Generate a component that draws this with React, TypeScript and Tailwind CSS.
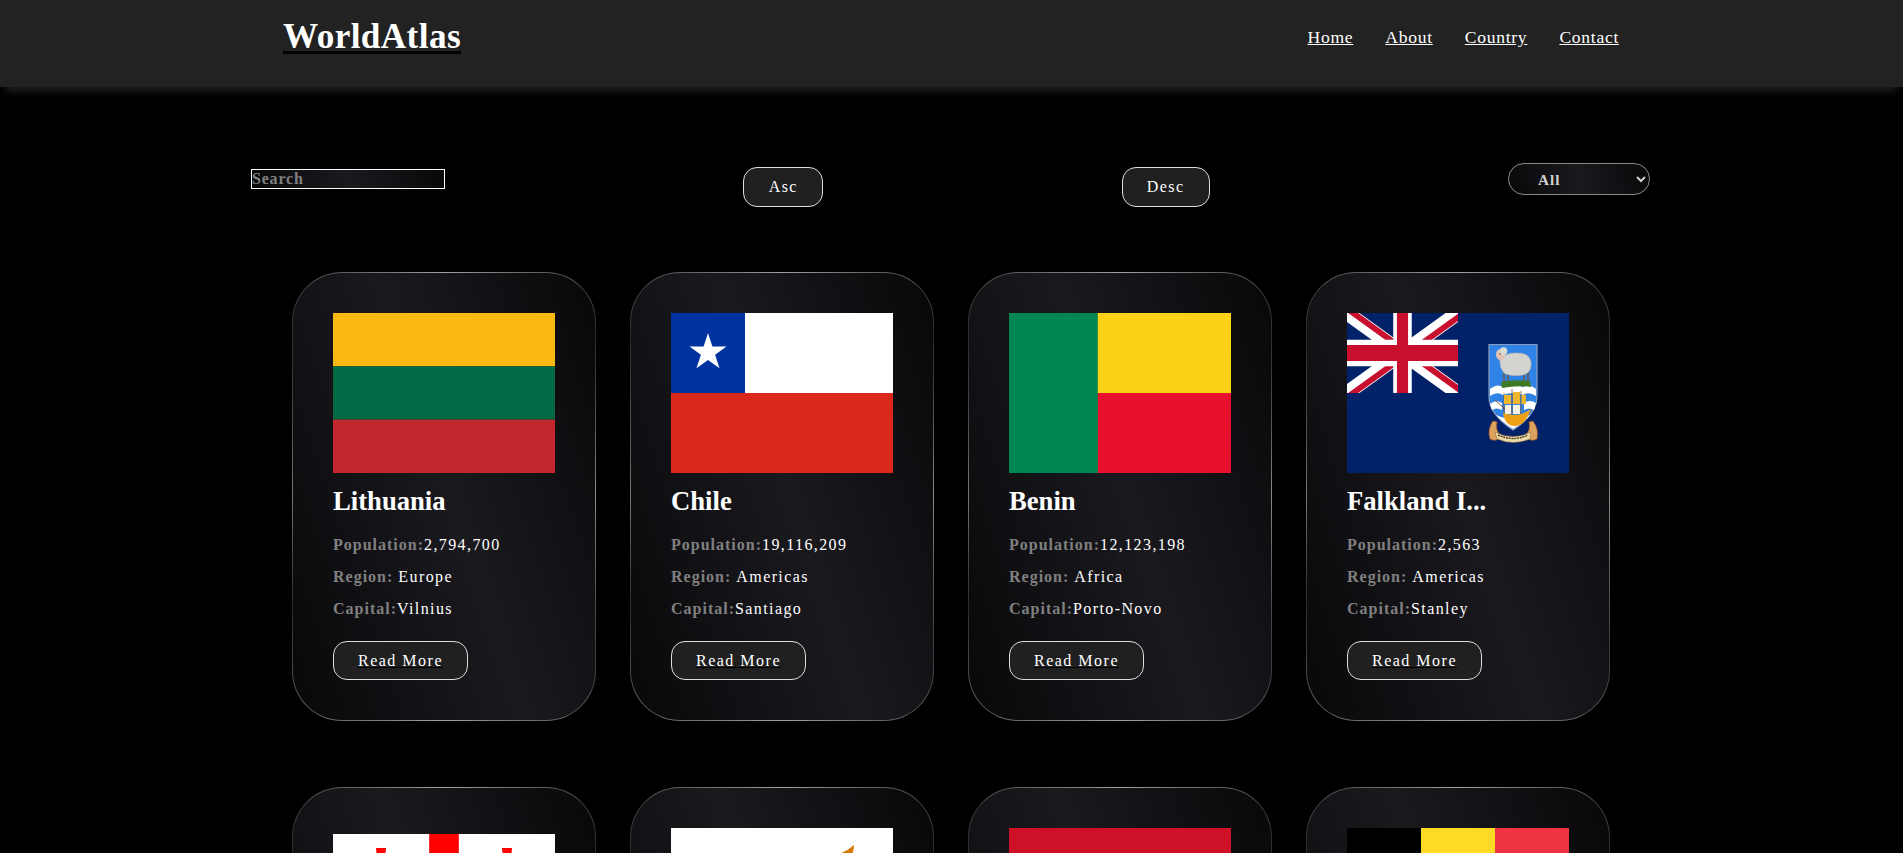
import React from "react";

const Lithuania = () => (
  <svg viewBox="0 0 222 160" className="w-full h-full block" preserveAspectRatio="none">
    <rect width="222" height="53.4" fill="#fdb913" />
    <rect y="53.3" width="222" height="53.4" fill="#006a44" />
    <rect y="106.6" width="222" height="53.4" fill="#c1272d" />
  </svg>
);

const Chile = () => (
  <svg viewBox="0 0 222 160" className="w-full h-full block">
    <rect width="222" height="160" fill="#da291c" />
    <rect width="222" height="80" fill="#fff" />
    <rect width="74" height="80" fill="#0032a0" />
    <path d="M37 20 L41.4 33.5 H55.5 L44.1 41.8 L48.5 55.3 L37 47 L25.5 55.3 L29.9 41.8 L18.5 33.5 H32.6 Z" fill="#fff" />
  </svg>
);

const Benin = () => (
  <svg viewBox="0 0 222 160" className="w-full h-full block">
    <rect width="222" height="80" fill="#fcd116" />
    <rect y="80" width="222" height="80" fill="#e8112d" />
    <rect width="88.8" height="160" fill="#008751" />
  </svg>
);

const Falkland = () => (
  <svg viewBox="0 0 222 160" className="w-full h-full block">
    <rect width="222" height="160" fill="#012169" />
    <svg x="0" y="0" width="111" height="80" viewBox="0 0 60 30" preserveAspectRatio="none">
      <path d="M0 0 L60 30 M60 0 L0 30" stroke="#fff" strokeWidth="6" />
      <path d="M0 0 L30 15 L60 30" stroke="#c8102e" strokeWidth="2.4" fill="none" transform="translate(0.9 -1.2)" />
      <path d="M60 0 L30 15 L0 30" stroke="#c8102e" strokeWidth="2.4" fill="none" transform="translate(0.9 1.2)" />
      <path d="M30 0 V30 M0 15 H60" stroke="#fff" strokeWidth="10" />
      <path d="M30 0 V30 M0 15 H60" stroke="#c8102e" strokeWidth="6" />
    </svg>
    {/* shield */}
    <path d="M142 31.5 H190 V84 Q190 101 166 117 Q142 101 142 84 Z" fill="#2f82e6" stroke="#8d9dbd" strokeWidth="1.2" />
    <path d="M143 76 Q150 70 156 74 Q166 70 176 74 Q182 70 189 76 V83 Q182 78 176 82 Q166 78 156 82 Q150 78 143 83 Z" fill="#fff" />
    <path d="M143 91 Q149 86 155 90 V97 Q149 94 145 97 Z M177 90 Q183 86 189 90 Q188 94 187 97 Q182 94 177 97 Z" fill="#fff" />
    <path d="M149 102 Q158 106 166 106 Q175 106 183 102 Q178 109 166 116 Q155 109 149 102 Z" fill="#fff" />
    {/* grass and sheep */}
    <path d="M157 58 V69 M161 59 V69 M177 59 V68 M181 58 V68" stroke="#6e5a48" strokeWidth="1.5" />
    <path d="M154 69 Q166 66 183 68 L184 74 Q170 72 155 75 Z" fill="#3f7a22" />
    <path d="M153 46 Q158 40 168 40 Q182 39 184 49 Q185 60 176 62 Q164 64 157 60 Q152 54 153 46 Z" fill="#d3d3cf" stroke="#b4b4b0" strokeWidth="0.6" />
    <ellipse cx="153.5" cy="41.5" rx="4.5" ry="5.5" fill="#e2c4b2" />
    <circle cx="156.5" cy="38" r="3.8" fill="#dcdbd6" />
    <circle cx="153" cy="41" r="0.7" fill="#5b3a2c" />
    {/* ship */}
    <path d="M148 87 L160 98" stroke="#7b5a3a" strokeWidth="1" />
    <path d="M165 76 V102 M174 78 V102 M157 80 V102" stroke="#7b5a3a" strokeWidth="0.8" />
    <path d="M157 82 H164 V91 H157 Z M166 79 H173 V91 H166 Z M174.5 82 H179 V91 H174.5 Z" fill="#eeb52e" />
    <path d="M158 92 H164 V101 H158 Z M166 92 H173 V101 H166 Z" fill="#f4f0e2" />
    <path d="M156 100 Q158 113 168 113 Q178 113 184 96 L177 100 Q168 104 156 100 Z" fill="#eda215" />
    {/* scrolls and motto */}
    <path d="M146 108 Q140 116 143 126 Q150 130 154 122 Q148 118 150 109 Z" fill="#dba25e" stroke="#a5552c" strokeWidth="0.7" />
    <path d="M186 108 Q192 116 190 126 Q183 130 178 122 Q184 118 182 109 Z" fill="#dba25e" stroke="#a5552c" strokeWidth="0.7" />
    <path d="M148 119 Q166 128 184 119 L183 126 Q166 133 150 126 Z" fill="#ebd9a7" stroke="#8a5a2c" strokeWidth="0.5" />
    <path d="M151 122 Q166 129 181 122" stroke="#4a3a22" strokeWidth="1.4" strokeDasharray="2 0.8" fill="none" />
  </svg>
);

const Georgia = () => (
  <div className="w-full h-full flex items-center">
    <svg viewBox="0 0 222 148" className="w-full block">
      <rect width="222" height="148" fill="#fff" />
      <path d="M96.2 0 H125.8 V59.2 H222 V88.8 H125.8 V148 H96.2 V88.8 H0 V59.2 H96.2 Z" fill="#f00" />
      {[[48, 37], [174, 37], [48, 111], [174, 111]].map(([x, y], i) => (
        <path
          key={i}
          transform={`translate(${x} ${y})`}
          d="M-5 -23 H5 L3.4 -7 Q3.5 -3.5 7 -3.4 L23 -5 V5 L7 3.4 Q3.5 3.5 3.4 7 L5 23 H-5 L-3.4 7 Q-3.5 3.5 -7 3.4 L-23 5 V-5 L-7 -3.4 Q-3.5 -3.5 -3.4 -7 Z"
          fill="#f00"
        />
      ))}
    </svg>
  </div>
);

const Cyprus = () => (
  <svg viewBox="0 0 222 160" className="w-full h-full block">
    <rect width="222" height="160" fill="#fff" />
    <path d="M183 17 Q183 24 179 30 Q168 42 158 50 Q152 58 140 62 Q128 66 122 78 Q116 84 106 90 Q98 96 88 94 Q76 90 66 82 Q54 76 56 66 Q56 56 62 52 Q72 52 76 44 Q84 40 92 46 Q100 50 112 46 Q128 46 140 48 Q146 50 150 42 Q160 32 168 26 Q176 23 183 17 Z" fill="#d57800" />
    <path d="M78 112 Q96 126 108 128 M144 112 Q126 126 114 128" stroke="#4e5b31" strokeWidth="3" fill="none" />
  </svg>
);

const RedWhite = () => (
  <svg viewBox="0 0 222 160" className="w-full h-full block">
    <rect width="222" height="160" fill="#fff" />
    <rect width="222" height="80" fill="#ce1126" />
  </svg>
);

const Belgium = () => (
  <svg viewBox="0 0 222 160" className="w-full h-full block">
    <rect width="74" height="160" fill="#000" />
    <rect x="74" width="74" height="160" fill="#fdda24" />
    <rect x="148" width="74" height="160" fill="#ef3340" />
  </svg>
);

const countries = [
  { name: "Lithuania", pop: "2,794,700", region: "Europe", capital: "Vilnius", Flag: Lithuania },
  { name: "Chile", pop: "19,116,209", region: "Americas", capital: "Santiago", Flag: Chile },
  { name: "Benin", pop: "12,123,198", region: "Africa", capital: "Porto-Novo", Flag: Benin },
  { name: "Falkland I...", pop: "2,563", region: "Americas", capital: "Stanley", Flag: Falkland },
];
const nextRow = [
  { id: "ge", Flag: Georgia },
  { id: "cy", Flag: Cyprus },
  { id: "id", Flag: RedWhite },
  { id: "be", Flag: Belgium },
];

const cardClass =
  "rounded-[50px] border border-transparent p-[40px] [background:linear-gradient(72deg,#08080a,#1a191e_52%,#08080a)_padding-box,conic-gradient(#a0a0a0,#2c2c2c_12%,#8a8a8a_25%,#3a3a3a_38%,#a0a0a0_50%,#2c2c2c_65%,#777777_75%,#2c2c2c_88%,#a0a0a0)_border-box]";

const Info = ({ label, value }: { label: string; value: string }) => (
  <p className="h-[32px] leading-[32px] text-[16px] tracking-[1.4px] text-white whitespace-pre">
    <span className="tracking-[1px] font-bold text-[#808080]">{label}</span>
    {value}
  </p>
);

export default function App() {
  return (
    <div className="h-screen overflow-hidden bg-black text-white font-['Liberation_Serif',serif]">
      <header className="h-[87px] bg-[#222222] shadow-[0_10px_8px_-6px_#222222]">
        <div className="mx-auto w-[1339px] h-[74px] pl-[1px] pr-[2px] flex items-center justify-between">
          <a href="#" className="text-[35.2px] leading-[40px] tracking-[0.4px] font-bold text-white underline decoration-black decoration-[3px] underline-offset-[3px]">
            WorldAtlas
          </a>
          <nav className="flex gap-[32px] text-[17.6px] tracking-[0.7px] leading-[20px]">
            {["Home", "About", "Country", "Contact"].map((n) => (
              <a key={n} href="#" className="text-white underline">
                {n}
              </a>
            ))}
          </nav>
        </div>
      </header>

      <main className="pr-[1px]">
        <div className="ml-[251px] mt-[76px] w-[1399px] flex justify-between items-start">
          <input
            placeholder="Search"
            className="mt-[6px] w-[194px] h-[20px] border border-white text-[16px] tracking-[0.8px] font-bold leading-[18px] outline-none placeholder:text-[#808080] bg-[linear-gradient(75deg,#08080a,#1a191e_50%,#08080a)]"
          />
          <button className="mt-[4px] w-[80px] h-[40px] rounded-[14px] border border-[#dddddd] bg-[#202020] text-[16px] tracking-[1.4px] text-white">Asc</button>
          <button className="mt-[4px] w-[88px] h-[40px] rounded-[14px] border border-[#dddddd] bg-[#202020] text-[16px] tracking-[1.4px] text-white">Desc</button>
          <select className="w-[142px] h-[32px] rounded-full border border-[#8a8a8a] pl-[25px] text-[15.2px] tracking-[1px] font-bold text-[#d0d0d0] outline-none bg-[linear-gradient(75deg,#08080a,#1a191e_50%,#08080a)]">
            <option>All</option>
            <option>Africa</option>
            <option>Americas</option>
            <option>Asia</option>
            <option>Europe</option>
            <option>Oceania</option>
          </select>
        </div>

        <ul className="mt-[65px] grid grid-cols-[repeat(4,304px)] justify-center gap-x-[34px] gap-y-[66px]">
          {countries.map(({ name, pop, region, capital, Flag }) => (
            <li key={name} className={cardClass}>
              <div className="w-[222px] h-[160px]">
                <Flag />
              </div>
              <h2 className="mt-[10px] text-[26.67px] leading-[36px] font-bold text-white whitespace-nowrap">{name}</h2>
              <div className="mt-[10px]">
                <Info label="Population:" value={pop} />
                <Info label="Region: " value={region} />
                <Info label="Capital:" value={capital} />
              </div>
              <button className="mt-[16px] w-[135px] h-[39px] rounded-[14px] border border-[#dddddd] bg-[#202020] text-[16px] tracking-[1.5px] text-white underline decoration-black">
                Read More
              </button>
            </li>
          ))}
          {nextRow.map(({ id, Flag }) => (
            <li key={id} className={`${cardClass} h-[449px]`}>
              <div className="w-[222px] h-[160px]">
                <Flag />
              </div>
            </li>
          ))}
        </ul>
      </main>
    </div>
  );
}
